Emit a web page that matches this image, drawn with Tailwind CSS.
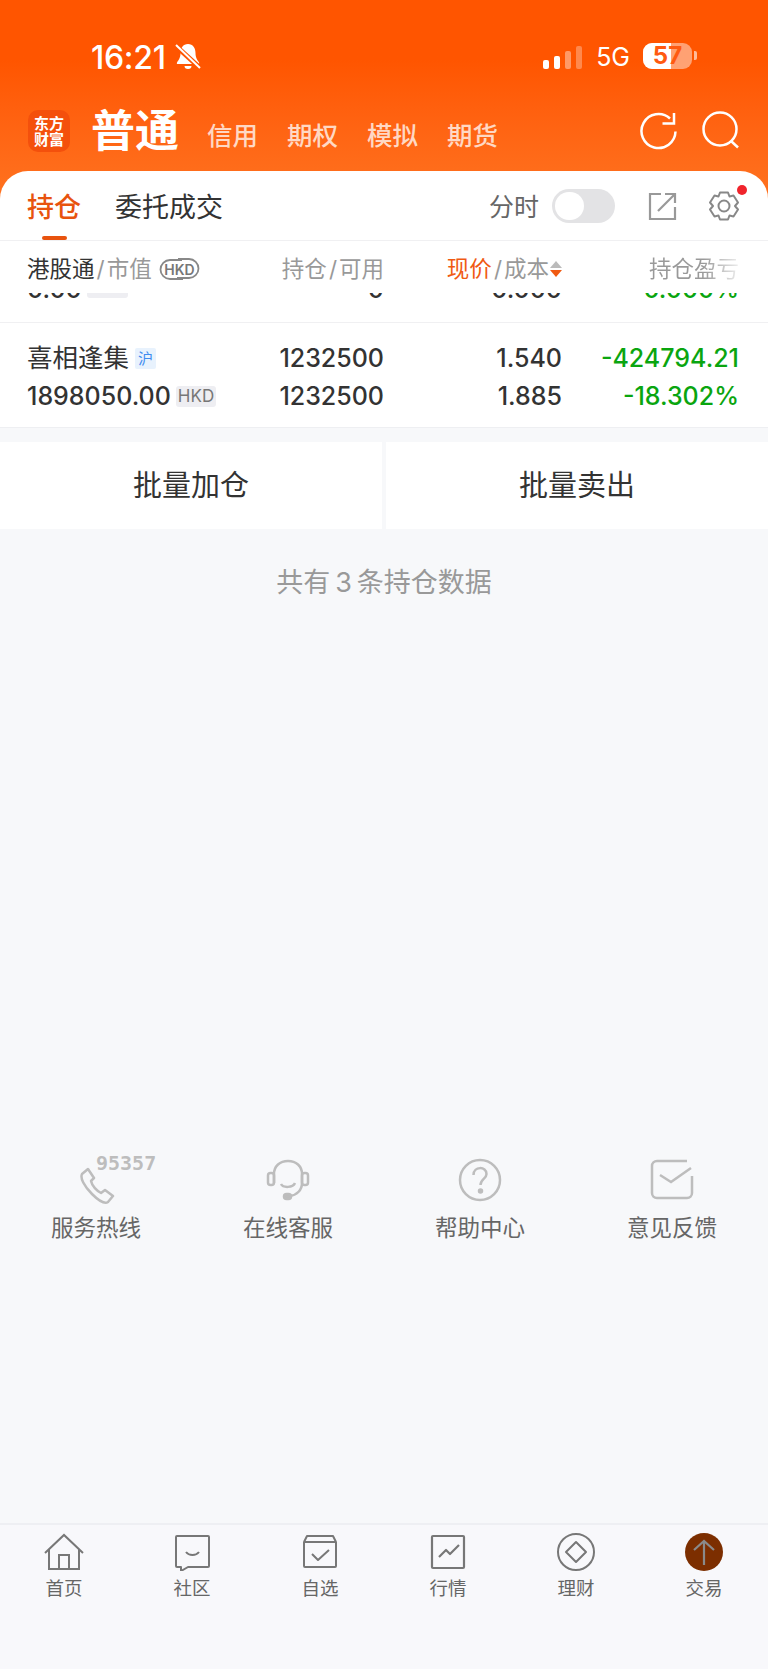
<!DOCTYPE html>
<html lang="zh-CN">
<head>
  <meta charset="UTF-8" />
  <meta name="viewport" content="width=device-width, initial-scale=1.0" />
  <title>交易</title>
  <script src="https://cdn.jsdelivr.net/npm/@tailwindcss/browser@4"></script>
</head>
<body class="w-[768px] h-[1669px] overflow-hidden bg-[#f7f8fa] font-['Inter','Noto_Sans_CJK_SC',sans-serif]">

  <!-- Header -->
  <div class="bg-gradient-to-b from-[#ff5500] from-[25%] to-[#ff7a25] text-white">
    <!-- Status bar -->
    <div class="h-[110px] flex items-start pt-[40px] pl-[91px] pr-[71px]">
      <span class="mt-[1px] text-[32px] leading-[34px] font-medium tracking-[-0.3px]">16:21</span>
      <svg class="ml-[9px] mt-[3px]" width="26" height="28" viewBox="0 0 26 28">
        <path d="M13 1c-5 0-7.500 4-7.500 9 0 5-2 7-3.500 9.500-.5 1 0 1.500 1 1.500h20c1 0 1.500-.5 1-1.500C22.500 17 20.500 15 20.500 10c0-5-2.500-9-7.500-9z" fill="#fff"/>
        <path d="M9.500 23a3.500 3 0 0 0 7 0z" fill="#fff"/>
        <path d="M1 3l24 22" stroke="#ff5500" stroke-width="5"/>
        <path d="M1 2l24 23" stroke="#fff" stroke-width="2"/>
      </svg>
      <div class="ml-auto flex items-end gap-[5px] h-[24px] mt-[5px]">
        <span class="w-[6px] h-[9px] rounded-[2px] bg-white"></span>
        <span class="w-[6px] h-[13px] rounded-[2px] bg-white"></span>
        <span class="w-[6px] h-[18px] rounded-[2px] bg-white/40"></span>
        <span class="w-[6px] h-[23px] rounded-[2px] bg-white/30"></span>
      </div>
      <span class="ml-[14px] text-[25px] leading-[34px]">5G</span>
      <div class="relative ml-[13px] mt-[3px] w-[49px] h-[26px] rounded-[9px] bg-white/45 overflow-hidden">
        <div class="w-[28px] h-full bg-white"></div>
        <span class="absolute inset-0 flex items-center justify-center text-[24px] leading-[26px] font-bold text-[#ff5a10]">57</span>
      </div>
      <span class="ml-[2px] mt-[11px] w-[3px] h-[9px] rounded-r-[2px] bg-white/60"></span>
    </div>

    <!-- Account tabs -->
    <div class="h-[61px] flex items-start pl-[28px] pr-[26px]">
      <div class="w-[42px] h-[42px] rounded-[10px] bg-[#f4500c] flex flex-col items-center justify-center font-['Noto_Sans_CJK_SC'] font-bold text-[15px] leading-[16px]">
        <span>东方</span>
        <span>财富</span>
      </div>
      <span class="ml-[21px] -mt-[6px] text-[44px] leading-[54px] font-bold">普通</span>
      <div class="ml-[28px] mt-[8px] flex gap-[29px] text-[25.500px] leading-[36px] font-medium text-white/75">
        <span>信用</span>
        <span>期权</span>
        <span>模拟</span>
        <span>期货</span>
      </div>
      <svg class="ml-auto mt-[1px]" width="40" height="40" viewBox="0 0 40 40" fill="none" stroke="#fff" stroke-width="2.500">
        <path d="M36.500 20.500A17 17 0 1 1 31 7.500"/>
        <path d="M35 2v10.500H23.500"/>
      </svg>
      <svg class="ml-[23px] mt-[1px]" width="40" height="40" viewBox="0 0 40 40" fill="none" stroke="#fff" stroke-width="2.500">
        <circle cx="18" cy="18" r="16.500"/>
        <path d="M29 30l7 6.500"/>
      </svg>
    </div>

    <!-- Tabs -->
    <div class="h-[70px] rounded-t-[28px] bg-white border-b border-[#f0f0f2] flex items-start text-[#333] relative">
      <div class="relative ml-[27px] mt-[21px] text-[27px] leading-[32px] text-[#e8530e] font-medium">
        持仓
        <span class="absolute left-[15px] top-[44px] w-[25px] h-[4px] rounded-full bg-[#e8530e]"></span>
      </div>
      <div class="ml-[34px] mt-[21px] text-[27px] leading-[32px]">委托成交</div>
      <div class="ml-auto mt-[20px] text-[25px] leading-[32px] text-[#666]">分时</div>
      <div class="ml-[13px] mt-[18px] w-[63px] h-[34px] rounded-full bg-[#e3e3e5] p-[3px]">
        <div class="w-[29px] h-[28px] rounded-full bg-white"></div>
      </div>
      <svg class="ml-[32px] mt-[21px]" width="30" height="29" viewBox="0 0 30 29" fill="none" stroke="#999" stroke-width="2.200">
        <path d="M14 2H3v25h25V15"/>
        <path d="M11 19L27 3M18 2h10v9"/>
      </svg>
      <svg class="ml-[30px] mt-[19px]" width="34" height="34" viewBox="0 0 34 34" fill="none" stroke="#888" stroke-width="2">
        <path d="M13 2.500h8l1.500 4 4-1 4.500 7-3 3.500 3 3.500-4.500 7-4-1-1.500 4h-8l-1.500-4-4 1-4.500-7 3-3.500-3-3.500 4.500-7 4 1z" stroke-linejoin="round"/>
        <circle cx="17" cy="16" r="5.500"/>
      </svg>
      <span class="absolute left-[737px] top-[14px] w-[10px] h-[10px] rounded-full bg-[#f0242c]"></span>
      <span class="w-[27px]"></span>
    </div>
  </div>

  <!-- Table -->
  <div class="bg-white">
    <!-- Table head -->
    <div class="h-[52px] flex items-center pt-[3px] text-[22.500px] leading-[28px] text-[#999]">
      <div class="w-[221px] pl-[27px] flex items-center">
        <span class="text-[#333]">港股通</span><span class="mx-[2px]">/</span><span>市值</span>
        <svg class="ml-[6px]" width="43" height="24" viewBox="0 0 43 24">
          <path d="M24 3H12a9.500 9.500 0 0 0 0 19h13" fill="none" stroke="#888" stroke-width="1.800"/>
          <path d="M20 2h11a9.500 9.500 0 0 1 0 19H19" fill="none" stroke="#888" stroke-width="1.800"/>
          <text x="21.500" y="18" text-anchor="middle" font-size="14" font-weight="600" fill="#777">HKD</text>
        </svg>
      </div>
      <div class="w-[163px] text-right"><span>持仓</span><span class="mx-[2px]">/</span><span>可用</span></div>
      <div class="w-[178px] flex items-center justify-end">
        <span class="text-[#f05a12]">现价</span><span class="mx-[2px]">/</span><span>成本</span>
        <span class="ml-[1px] flex flex-col gap-[2px]">
          <span class="w-0 h-0 border-x-[6px] border-x-transparent border-b-[7px] border-b-[#bbb]"></span>
          <span class="w-0 h-0 border-x-[6px] border-x-transparent border-t-[7px] border-t-[#f05a12]"></span>
        </span>
      </div>
      <div class="w-[177px] text-right">
        <span class="bg-gradient-to-r from-[#999] from-[60%] to-[#eee] bg-clip-text text-transparent">持仓盈亏</span>
      </div>
    </div>

    <!-- Row scrolled out of view -->
    <div class="h-[30px] overflow-hidden border-b border-[#f0f0f2]">
      <div class="h-[30px] -mt-[19px] flex items-center text-[25px] leading-[30px] font-medium text-[#333]">
        <div class="w-[221px] pl-[27px] flex items-center gap-[5px]">
          <span>0.00</span>
          <span class="w-[41px] h-[18px] rounded-[3px] bg-[#eeeef2]"></span>
        </div>
        <div class="w-[163px] text-right">0</div>
        <div class="w-[178px] text-right">0.000</div>
        <div class="w-[177px] text-right text-[#0aa50f]">0.000%</div>
      </div>
    </div>

    <!-- Row -->
    <div class="h-[105px] pt-[16px] border-b border-[#eeeff2] text-[25px] leading-[38px] font-medium text-[#333]">
      <div class="flex items-center h-[38px]">
        <div class="w-[221px] pl-[27px] flex items-center gap-[6px]">
          <span class="text-[25.500px] font-normal">喜相逢集</span>
          <span class="w-[21px] h-[21px] rounded-[2px] bg-[#e8f2fd] text-[#3f8cf0] text-[15px] leading-[21px] font-normal text-center">沪</span>
        </div>
        <div class="w-[163px] text-right">1232500</div>
        <div class="w-[178px] text-right">1.540</div>
        <div class="w-[177px] text-right text-[#0aa50f]">-424794.21</div>
      </div>
      <div class="flex items-center h-[38px]">
        <div class="w-[221px] pl-[27px] flex items-center gap-[5px]">
          <span>1898050.00</span>
          <span class="h-[21px] px-[2px] rounded-[3px] bg-[#eeeef2] text-[#777] text-[17px] leading-[21px] font-normal">HKD</span>
        </div>
        <div class="w-[163px] text-right">1232500</div>
        <div class="w-[178px] text-right">1.885</div>
        <div class="w-[177px] text-right text-[#0aa50f]">-18.302%</div>
      </div>
    </div>
  </div>

  <!-- Batch buttons -->
  <div class="mt-[14px] h-[87px] flex gap-[4px] text-[29px] text-[#333]">
    <div class="flex-1 bg-white flex items-center justify-center pt-[1px]">批量加仓</div>
    <div class="flex-1 bg-white flex items-center justify-center pt-[1px]">批量卖出</div>
  </div>

  <p class="mt-[34px] text-center text-[27px] leading-[40px] text-[#999]">共有<span class="mx-[5px]">3</span>条持仓数据</p>

  <!-- Service links -->
  <div class="mt-[551px] h-[100px] grid grid-cols-4 text-[22.500px] text-[#666] text-center">
    <div class="flex flex-col items-center">
      <div class="relative w-[96px] h-[56px]">
        <span class="absolute left-[48px] -top-[1px] text-[20px] leading-[20px] font-bold text-[#bdbdbd] font-['DejaVu_Sans_Mono']">95357</span>
        <svg class="absolute left-[29px] top-[12px]" width="40" height="40" viewBox="0 0 40 40" fill="none" stroke="#bdbdbd" stroke-width="2.500" stroke-linejoin="round">
          <path d="M5 8l6-5 6 9-3 3c1 5 6 10 10 12l4-3 8 6-5 6c-3 2-9-1-16-8C7 20 3 12 5 8z"/>
        </svg>
      </div>
      <span class="mt-[2px] leading-[32px]">服务热线</span>
    </div>
    <div class="flex flex-col items-center">
      <svg width="44" height="56" viewBox="0 0 44 56" fill="none" stroke="#bdbdbd" stroke-width="2.500">
        <path d="M8 29V20c0-8 6-13 14-13s14 5 14 13v9c0 7-5 12-12 13"/>
        <rect x="2" y="19" width="6" height="12" rx="2.500"/>
        <rect x="36" y="19" width="6" height="12" rx="2.500"/>
        <path d="M15 30c2 4 12 4 14-1"/>
        <rect x="18" y="40" width="7" height="5" rx="2.500" fill="#bdbdbd"/>
      </svg>
      <span class="mt-[2px] leading-[32px]">在线客服</span>
    </div>
    <div class="flex flex-col items-center">
      <svg width="44" height="56" viewBox="0 0 44 56" fill="none" stroke="#bdbdbd" stroke-width="2.500">
        <circle cx="22" cy="26" r="20"/>
        <path d="M15.500 21c0-9 13-9 13-1 0 5-6 5-6 11"/>
        <circle cx="22.500" cy="37" r="1.500" fill="#bdbdbd"/>
      </svg>
      <span class="mt-[2px] leading-[32px]">帮助中心</span>
    </div>
    <div class="flex flex-col items-center">
      <svg width="44" height="56" viewBox="0 0 44 56" fill="none" stroke="#bdbdbd" stroke-width="2.500">
        <path d="M37 7H7a5 5 0 0 0-5 5v27a5 5 0 0 0 5 5h30a5 5 0 0 0 5-5V22"/>
        <path d="M10 21l11 7 20-14"/>
      </svg>
      <span class="mt-[2px] leading-[32px]">意见反馈</span>
    </div>
  </div>

  <!-- Bottom nav -->
  <nav class="mt-[269px] h-[146px] bg-[#f8f8fb] border-t-2 border-[#eeeff3] grid grid-cols-6 text-[18.500px] leading-[24px] text-[#666] text-center">
    <div class="flex flex-col items-center pt-[8px]">
      <svg width="40" height="38" viewBox="0 0 40 38" fill="none" stroke="#777" stroke-width="2">
        <path d="M1 20L20 2l19 18M5 16v20h30V16M15 36V22h10v14"/>
      </svg>
      <span class="mt-[5px]">首页</span>
    </div>
    <div class="flex flex-col items-center pt-[8px]">
      <svg width="40" height="38" viewBox="0 0 40 38" fill="none" stroke="#777" stroke-width="2" stroke-linejoin="round">
        <path d="M5 3h31a1 1 0 0 1 1 1v29a1 1 0 0 1-1 1H16l-7 4v-4H5a1 1 0 0 1-1-1V4a1 1 0 0 1 1-1z"/>
        <path d="M14 19c3 4 10 4 13 0"/>
      </svg>
      <span class="mt-[5px]">社区</span>
    </div>
    <div class="flex flex-col items-center pt-[8px]">
      <svg width="40" height="38" viewBox="0 0 40 38" fill="none" stroke="#777" stroke-width="2" stroke-linejoin="round">
        <path d="M4 9l3-6h26l3 6M4 9h32v24a1 1 0 0 1-1 1H5a1 1 0 0 1-1-1z"/>
        <path d="M12 21l6 6 11-10"/>
      </svg>
      <span class="mt-[5px]">自选</span>
    </div>
    <div class="flex flex-col items-center pt-[8px]">
      <svg width="40" height="38" viewBox="0 0 40 38" fill="none" stroke="#777" stroke-width="2.200" stroke-linejoin="round">
        <rect x="4" y="3" width="32" height="32" rx="1"/>
        <path d="M11 24l7-7 4 4 9-9"/>
      </svg>
      <span class="mt-[5px]">行情</span>
    </div>
    <div class="flex flex-col items-center pt-[8px]">
      <svg width="40" height="38" viewBox="0 0 40 38" fill="none" stroke="#777" stroke-width="2">
        <circle cx="20" cy="19" r="18"/>
        <path d="M20 9l10 10-10 10-10-10z" stroke-linejoin="round"/>
      </svg>
      <span class="mt-[5px]">理财</span>
    </div>
    <div class="flex flex-col items-center pt-[8px]">
      <div class="w-[38px] h-[38px] rounded-full bg-[#7c2e00] flex items-center justify-center">
        <svg width="24" height="30" viewBox="0 0 24 30" fill="none" stroke="#8a8a8a" stroke-width="2.200">
          <path d="M12 28V4M2 13l10-9 10 9"/>
        </svg>
      </div>
      <span class="mt-[5px]">交易</span>
    </div>
  </nav>
</body>
</html>
